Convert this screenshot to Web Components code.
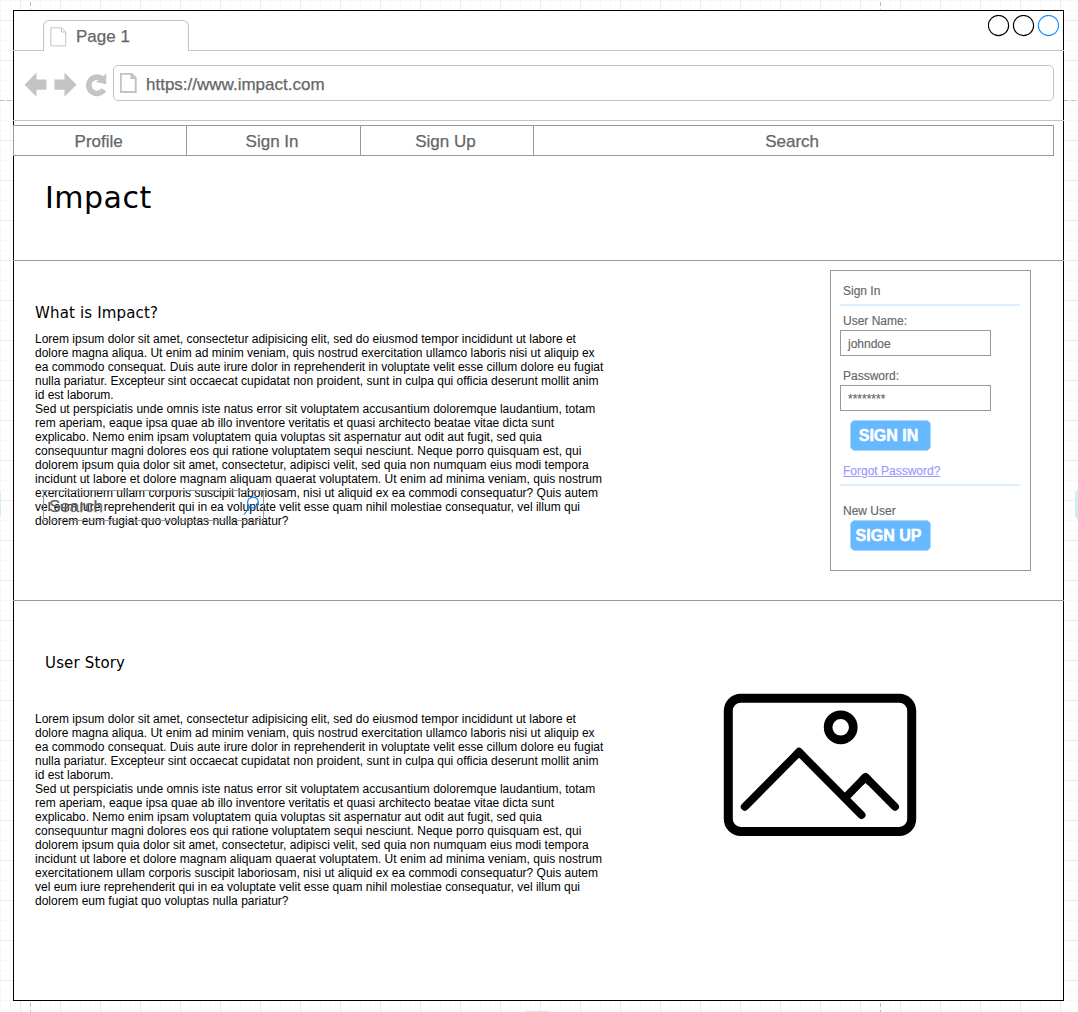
<!DOCTYPE html>
<html lang="en">
<head>
<meta charset="utf-8">
<title>Impact wireframe</title>
<style>
html,body{margin:0;padding:0}
body{width:1078px;height:1012px;overflow:hidden;background:#fff;font-family:"Liberation Sans",Arial,sans-serif;font-size:12px;line-height:14px;color:#000}
</style>
</head>
<body>
<diagram-canvas>
  <browser-frame tab="Page 1" url="https://www.impact.com">
    <nav-bar></nav-bar>
    <page-banner>Impact</page-banner>
    <about-section></about-section>
    <story-section></story-section>
  </browser-frame>
</diagram-canvas>
<script>
const define = (name, html) => customElements.define(name, class extends HTMLElement {
  constructor(){
    super();
    const t = document.createElement('template');
    t.innerHTML = html.replace(/\{(\w+)\}/g, (_, k) => this.getAttribute(k) || '');
    this.attachShadow({mode:'open'}).append(t.content.cloneNode(true));
  }
});

define('lorem-copy', `<style>
:host{display:block;width:572px;white-space:nowrap;font-size:12px;line-height:14px}
p{margin:0;height:14px}
</style>` + [
'Lorem ipsum dolor sit amet, consectetur adipisicing elit, sed do eiusmod tempor incididunt ut labore et',
'dolore magna aliqua. Ut enim ad minim veniam, quis nostrud exercitation ullamco laboris nisi ut aliquip ex',
'ea commodo consequat. Duis aute irure dolor in reprehenderit in voluptate velit esse cillum dolore eu fugiat',
'nulla pariatur. Excepteur sint occaecat cupidatat non proident, sunt in culpa qui officia deserunt mollit anim',
'id est laborum.',
'Sed ut perspiciatis unde omnis iste natus error sit voluptatem accusantium doloremque laudantium, totam',
'rem aperiam, eaque ipsa quae ab illo inventore veritatis et quasi architecto beatae vitae dicta sunt',
'explicabo. Nemo enim ipsam voluptatem quia voluptas sit aspernatur aut odit aut fugit, sed quia',
'consequuntur magni dolores eos qui ratione voluptatem sequi nesciunt. Neque porro quisquam est, qui',
'dolorem ipsum quia dolor sit amet, consectetur, adipisci velit, sed quia non numquam eius modi tempora',
'incidunt ut labore et dolore magnam aliquam quaerat voluptatem. Ut enim ad minima veniam, quis nostrum',
'exercitationem ullam corporis suscipit laboriosam, nisi ut aliquid ex ea commodi consequatur? Quis autem',
'vel eum iure reprehenderit qui in ea voluptate velit esse quam nihil molestiae consequatur, vel illum qui',
'dolorem eum fugiat quo voluptas nulla pariatur?'].map(l => `<p>${l}</p>`).join(''));

define('page-icon', `<style>:host{display:block}svg{display:block}</style>
<svg width="17" height="21" viewBox="0 0 17 21" fill="none" stroke="#c4c4c4" stroke-width="{weight}"><path d="M.8 .8H11.5L15.7 5V18.9H.8ZM11.5 .8V5H15.7"/></svg>`);

define('nav-bar', `<style>
:host{display:flex;box-sizing:border-box;width:1041px;height:31px;margin-top:4px;border:1px solid #999;font-size:17px;line-height:31px;color:#666;-webkit-text-stroke:.25px #666}
div{box-sizing:border-box;width:173.4px;text-align:center;text-indent:-3px;border-right:1px solid #999}
div:last-child{flex:1;border:0}
</style><div>Profile</div><div>Sign In</div><div>Sign Up</div><div>Search</div>`);

define('page-banner', `<style>
:host{display:block;box-sizing:border-box;height:105px;border-bottom:1px solid #999;padding:23px 0 0 32px;font:30px/38px "DejaVu Sans",Verdana,sans-serif;letter-spacing:.5px}
</style><slot></slot>`);

define('section-title', `<style>
:host{display:block;font:15px/18px "DejaVu Sans",Verdana,sans-serif;letter-spacing:.15px}
</style><slot></slot>`);

define('search-box', `<style>
:host{display:flex;box-sizing:border-box;width:221px;height:31px;border:1px solid #999;padding:0 0 0 5px;justify-content:space-between;font-size:17px;line-height:31px;color:#666;-webkit-text-stroke:.25px #666}
svg{display:block;margin-top:4px}
</style><span>Search</span><svg width="20" height="22" viewBox="-1 0 20 22" fill="none" stroke="#0a84ff" stroke-width="1.2"><circle cx="9" cy="7.5" r="5.4"/><path d="M6 12L0 19.5"/></svg>`);

define('push-button', `<style>
:host{display:block;box-sizing:border-box;width:81px;height:31px;margin-left:19px;border:1px solid #a5d6ff;border-radius:5px;background:#66b8ff;color:#fff;font-weight:bold;font-size:16px;line-height:30px;text-align:center;text-indent:-4px;-webkit-text-stroke:.5px #fff}
</style><slot></slot>`);

define('text-field', `<style>
:host{display:block;margin-left:9px}
label{display:block;padding-left:3px;height:16px}
div{box-sizing:border-box;width:151px;height:26px;border:1px solid #999;padding-left:7px;line-height:26px}
</style><label>{label}</label><div><slot></slot></div>`);

define('login-panel', `<style>
:host{display:flex;flex-direction:column;box-sizing:border-box;width:201px;height:301px;border:1px solid #999;color:#666;padding-top:13px;-webkit-text-stroke:.15px}
.t{padding-left:12px;height:20px}
hr{border:0;margin:0 0 0 9px;width:180px;height:2px;background:#dbeeff}
a{color:#9999ff;text-decoration:underline;margin:13px 0 0 12px;height:20px;width:98px}
</style>
<div class="t">Sign In</div><hr>
<text-field label="User Name:" style="margin-top:8px">johndoe</text-field>
<text-field label="Password:" style="margin-top:13px">********</text-field>
<push-button style="margin-top:9px">SIGN IN</push-button>
<a>Forgot Password?</a><hr>
<div class="t" style="margin-top:18px;height:16px">New User</div>
<push-button>SIGN UP</push-button>`);

define('about-section', `<style>
:host{display:flex;box-sizing:border-box;height:340px;border-bottom:1px solid #999;padding:9px 33px 0 22px;justify-content:space-between}
.l{padding-top:34px;position:relative}
lorem-copy{margin-top:10px}
search-box{position:absolute;left:8px;top:220px}
</style>
<div class="l"><section-title>What is Impact?</section-title><lorem-copy></lorem-copy><search-box></search-box></div>
<login-panel></login-panel>`);

define('image-glyph', `<style>:host{display:block}svg{display:block}</style>
<svg width="194" height="144" viewBox="723 693 194 144" fill="none" stroke="#000" stroke-linecap="round" stroke-linejoin="round"><rect x="728.3" y="698.2" width="183.4" height="133.2" rx="12.5" stroke-width="9"/><circle cx="840.7" cy="727.3" r="12.6" stroke-width="8.6"/><path stroke-width="8" stroke-linejoin="miter" stroke-miterlimit="1" d="M744.8 806.7L799 752L861.5 815M846 797L865.5 777L895 806.7"/><path stroke-width="7.6" d="M795 756L799 751.6L803 756M862 781L865.6 776.8L869 781"/></svg>`);

define('story-section', `<style>
:host{display:flex;box-sizing:border-box;height:400px;padding:53px 0 0 22px}
section-title{margin-left:10px}
lorem-copy{margin-top:40px}
image-glyph{margin:39px 0 0 116px}
</style>
<div><section-title>User Story</section-title><lorem-copy></lorem-copy></div>
<image-glyph></image-glyph>`);

define('browser-frame', `<style>
:host{display:flex;flex-direction:column;width:1051px;height:991px;background:#fff;box-shadow:inset 0 0 0 1px #000}
.tabs{display:flex;height:41px;align-items:stretch}
.line{box-sizing:border-box;border-bottom:1px solid #c4c4c4;width:30px}
.grow{flex:1;display:flex;justify-content:flex-end;padding:5px 5px 0 0}
.tab{box-sizing:border-box;width:146px;margin-top:10px;border:1px solid #c4c4c4;border-bottom:0;border-radius:6px 6px 0 0;display:flex;padding:6px 0 0 6px;font-size:17px;line-height:20px;color:#666;gap:9px}
.bar{box-sizing:border-box;height:70px;border-bottom:1px solid #c4c4c4;display:flex;padding:14px 10px 0 11px}
span{-webkit-text-stroke:.25px #666}
.ic{display:block;margin-top:5px;width:89px;flex:none}
.url{box-sizing:border-box;flex:1;height:36px;border:1px solid #c4c4c4;border-radius:5px;display:flex;gap:9px;padding:7px 0 0 6px;font-size:17px;line-height:24px;color:#666}
</style>
<div class="tabs"><div class="line"></div><div class="tab"><page-icon weight="1"></page-icon><span>{tab}</span></div>
<div class="line grow"><svg width="71" height="22" fill="none" stroke="#000" stroke-width="1.1"><circle cx="10.5" cy="10.5" r="10.1"/><circle cx="35.5" cy="10.5" r="10.1"/><circle cx="60.5" cy="10.5" r="10.1" stroke="#1790ff"/></svg></div></div>
<div class="bar"><svg class="ic" width="89" height="30" viewBox="24 70 89 30" fill="#c4c4c4"><path d="M24.5 84.7L36.5 72.5V79.5H46.5V89.8H36.5V96.8ZM76.5 84.7L64.5 72.5V79.5H54.5V89.8H64.5V96.8Z"/><path d="M103.8 89.8A8.2 8.2 0 1 1 101.8 78.6" fill="none" stroke="#c4c4c4" stroke-width="5.6"/><path d="M106.4 73.5L106.2 84.2L95.8 82Z"/></svg>
<div class="url"><page-icon weight="2"></page-icon><span>{url}</span></div></div>
<slot></slot>`);

define('diagram-canvas', `<style>
:host{display:block;box-sizing:border-box;width:1078px;height:1012px;padding:10px 0 0 13px;position:relative;
background:
linear-gradient(90deg,#ebebeb 1px,transparent 1px) 20px 0/40px 40px,
linear-gradient(#ebebeb 1px,transparent 1px) 0 20px/40px 40px,
linear-gradient(90deg,#f8f8f8 1px,transparent 1px) 0 0/10px 10px,
linear-gradient(#f8f8f8 1px,transparent 1px) 0 0/10px 10px,#fff}
.over{position:absolute;left:0;top:0}
slot{position:relative;display:block}
</style>
<svg class="over" width="1078" height="1012"><path d="M30.5 2V1012M880.5 2V1012M0 100.5H1078" stroke="#bbb" stroke-dasharray="4 3" fill="none"/><path d="M0 492L1 493V516L0 517ZM1078 489L1075 492.5V517L1078 520ZM524 1012L525 1011H549L550 1012Z" fill="#d3edf8"/></svg>
<slot></slot>`);
</script>
</body>
</html>
